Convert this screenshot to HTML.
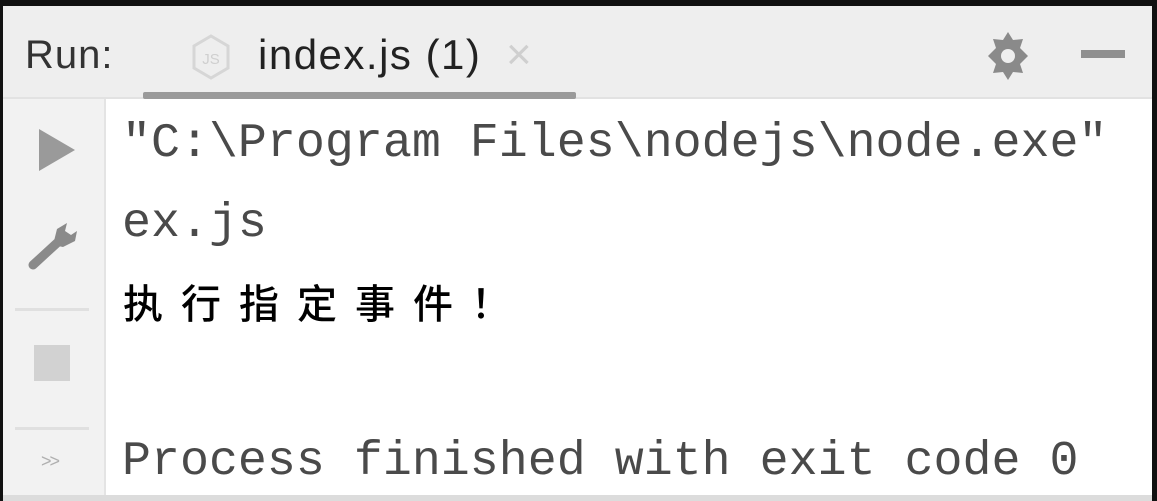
<!DOCTYPE html>
<html><head><meta charset="utf-8"><style>
html,body{margin:0;padding:0;}
body{width:1157px;height:501px;background:#111;position:relative;overflow:hidden;font-family:"Liberation Sans",sans-serif;}
.win{position:absolute;left:3px;top:6px;width:1149px;height:495px;background:#eeeeee;}
.hdr{position:absolute;left:0;top:0;width:1149px;height:91px;background:#eeeeee;border-bottom:2px solid #e2e2e2;}
.gut{position:absolute;left:0;top:93px;width:101px;height:396px;background:#f2f2f2;border-right:2px solid #e4e4e4;}
.con{position:absolute;left:103px;top:93px;width:1046px;height:396px;background:#fff;}
.bot{position:absolute;left:0;top:489px;width:1149px;height:6px;background:#dcdcdc;}
.t{position:absolute;white-space:pre;}
.mono{font-family:"Liberation Mono",monospace;font-size:48.3px;color:#4a4a4a;}
</style></head><body>
<div class="win">
 <div class="hdr">
  <div class="t" style="left:22px;top:27px;font-size:40px;color:#333;letter-spacing:1px;">Run:</div>
  <svg style="position:absolute;left:187px;top:27px" width="42" height="48" viewBox="0 0 42 48"><path d="M21 3 L38 13 L38 35 L21 45 L4 35 L4 13 Z" fill="none" stroke="#d6d6d6" stroke-width="3"/><text x="21" y="31" font-size="15" text-anchor="middle" fill="#cfcfcf" font-family="Liberation Sans">JS</text></svg>
  <div class="t" style="left:255px;top:25px;font-size:42px;color:#222;letter-spacing:1.5px;">index.js (1)</div>
  <div class="t" style="left:503px;top:24px;font-size:44px;color:#cfcfcf;">×</div>
  <div style="position:absolute;left:140px;top:86px;width:433px;height:7px;background:#9a9a9a;border-radius:2px;"></div>
  <svg style="position:absolute;left:982px;top:24px" width="46" height="52" viewBox="0 0 46 52"><path d="M23 2 L28 10 L38 9 L35 18 L43 26 L35 34 L38 43 L28 42 L23 50 L18 42 L8 43 L11 34 L3 26 L11 18 L8 9 L18 10 Z" fill="#8a8a8a"/><circle cx="23" cy="26" r="7" fill="#eee"/></svg>
  <div style="position:absolute;left:1078px;top:44px;width:44px;height:8px;background:#8f8f8f;"></div>
 </div>
 <div class="gut">
  <svg style="position:absolute;left:34px;top:28px" width="40" height="46"><path d="M2 2 L38 23 L2 44 Z" fill="#9a9a9a"/></svg>
  <svg style="position:absolute;left:24px;top:120px" width="54" height="52" viewBox="0 0 54 52"><path d="M6 46 L30 24" fill="none" stroke="#8a8a8a" stroke-width="9" stroke-linecap="round"/><path d="M26 26 L30 10 L40 4 L38 12 L44 16 L50 12 L48 22 L36 28 Z" fill="#8a8a8a"/></svg>
  <div style="position:absolute;left:12px;top:209px;width:74px;height:3px;background:#e0e0e0;"></div>
  <div style="position:absolute;left:31px;top:246px;width:36px;height:36px;background:#d2d2d2;"></div>
  <div style="position:absolute;left:12px;top:328px;width:74px;height:3px;background:#e0e0e0;"></div>
  <div class="t" style="left:38px;top:352px;font-size:18px;color:#b0b0b0;letter-spacing:-2px;">&gt;&gt;</div>
 </div>
 <div class="con">
  <div class="t mono" style="left:16px;top:17px;">"C:\Program Files\nodejs\node.exe"</div>
  <div class="t mono" style="left:16px;top:97px;">ex.js</div>
  <div class="t" style="left:17px;top:173px;font-family:'Liberation Sans','Noto Sans CJK SC',sans-serif;font-size:40px;font-weight:500;color:#000;letter-spacing:18px;">执行指定事件！</div>
  <div class="t mono" style="left:16px;top:335px;">Process finished with exit code 0</div>
 </div>
 <div class="bot"></div>
</div>
</body></html>
